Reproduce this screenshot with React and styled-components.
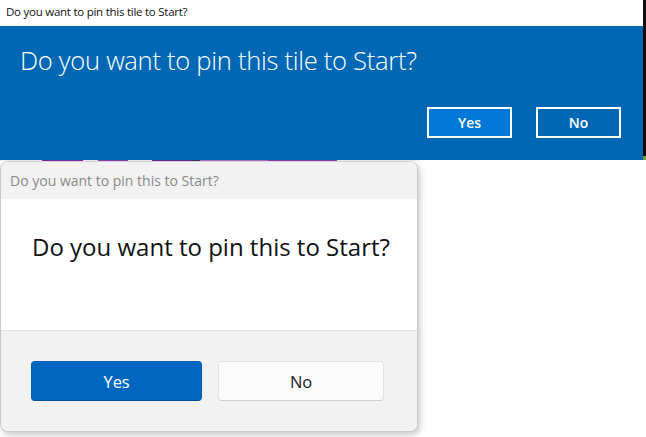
import React from "react";
import styled, { createGlobalStyle } from "styled-components";

const Global = createGlobalStyle`
  html, body {
    margin: 0;
    padding: 0;
    background: #ffffff;
  }
  body {
    font-family: "Segoe UI", "Noto Sans", "Open Sans", sans-serif;
    width: 646px;
    height: 437px;
    overflow: hidden;
  }
`;

const Page = styled.div`
  display: flex;
  flex-direction: column;
  width: 646px;
  height: 437px;
`;

const TopRow = styled.div`
  display: flex;
  height: 160px;
`;

const LegacyDialog = styled.div`
  width: 643px;
  display: flex;
  flex-direction: column;
`;

const LegacyTitle = styled.div`
  height: 26px;
  background: #ffffff;
  color: #111;
  font-family: "Open Sans", sans-serif;
  font-size: 11.5px;
  letter-spacing: -0.25px;
  padding-left: 6px;
  line-height: 24px;
`;

const LegacyBody = styled.div`
  flex: 1;
  background: #0067b4;
  padding: 17px 0 0 20px;
  display: flex;
  flex-direction: column;
`;

const LegacyHeading = styled.div`
  color: #ffffff;
  font-family: "Open Sans", sans-serif;
  font-weight: 300;
  font-size: 25.6px;
  letter-spacing: -0.3px;
  line-height: 35px;
`;

const LegacyActions = styled.div`
  display: flex;
  gap: 24px;
  margin-top: 29px;
  padding-left: 407px;
`;

const LegacyButton = styled.div`
  width: 85px;
  height: 31px;
  box-sizing: border-box;
  border: 2px solid #ffffff;
  background: ${(p) => (p.$primary ? "#0078d7" : "#0067b4")};
  color: #ffffff;
  font-family: "Open Sans", sans-serif;
  font-weight: 600;
  font-size: 14px;
  display: flex;
  align-items: center;
  justify-content: center;
`;

const SideStrip = styled.div`
  flex: 1;
  background: #120a0a;
  border-bottom: 4px solid #6aa535;
`;

const Lower = styled.div`
  display: flex;
  flex-direction: column;
`;

const TileStrip = styled.div`
  width: 420px;
  height: 1px;
  display: flex;
`;

const Tile = styled.div`
  height: 1px;
  width: ${(p) => p.$w}px;
  background: ${(p) => p.$c};
`;

const ModernDialog = styled.div`
  width: 418px;
  height: 271px;
  box-sizing: border-box;
  border: 1px solid #c9c9c9;
  border-top-color: #d4d4d4;
  border-radius: 8px;
  overflow: hidden;
  display: flex;
  flex-direction: column;
  box-shadow: 2px 3px 6px rgba(0, 0, 0, 0.22);
  background: #ffffff;
`;

const ModernHeader = styled.div`
  height: 37px;
  background: #f2f2f2;
  color: #8a8a8a;
  font-family: "Open Sans", sans-serif;
  font-size: 14px;
  line-height: 37px;
  padding-left: 9px;
  letter-spacing: 0;
`;

const ModernBody = styled.div`
  height: 132px;
  background: #ffffff;
  display: flex;
  align-items: center;
  padding-left: 31px;
  padding-bottom: 36px;
  box-sizing: border-box;
  border-bottom: 1px solid #e1e1e1;
  color: #111;
  font-family: "Open Sans", sans-serif;
  font-size: 24px;
  letter-spacing: 0;
`;

const ModernFooter = styled.div`
  flex: 1;
  background: #f2f2f2;
  display: grid;
  grid-template-columns: 171px 166px;
  gap: 16px;
  padding: 30px 0 0 30px;
`;

const ModernButton = styled.div`
  height: 40px;
  box-sizing: border-box;
  border-radius: 4px;
  border: 1px solid ${(p) => (p.$primary ? "#0060b4" : "#e3e3e3")};
  border-bottom-color: ${(p) => (p.$primary ? "#004f96" : "#cdcdcd")};
  background: ${(p) => (p.$primary ? "#0067c0" : "#fbfbfb")};
  color: ${(p) => (p.$primary ? "#ffffff" : "#1a1a1a")};
  font-family: "Open Sans", sans-serif;
  font-size: 16.5px;
  letter-spacing: -0.2px;
  display: flex;
  align-items: center;
  justify-content: center;
`;

const tiles = [
  { w: 42, c: "#eeeeee" },
  { w: 41, c: "#7a2fa6" },
  { w: 15, c: "#eeeeee" },
  { w: 30, c: "#8a3fae" },
  { w: 24, c: "#eeeeee" },
  { w: 41, c: "#6f2a9c" },
  { w: 7, c: "#3a3a4a" },
  { w: 68, c: "#b070d0" },
  { w: 69, c: "#8d3cb0" },
  { w: 83, c: "#eeeeee" },
];

export default function App() {
  return (
    <Page>
      <Global />
      <TopRow>
        <LegacyDialog>
          <LegacyTitle>Do you want to pin this tile to Start?</LegacyTitle>
          <LegacyBody>
            <LegacyHeading>Do you want to pin this tile to Start?</LegacyHeading>
            <LegacyActions>
              <LegacyButton $primary>Yes</LegacyButton>
              <LegacyButton>No</LegacyButton>
            </LegacyActions>
          </LegacyBody>
        </LegacyDialog>
        <SideStrip />
      </TopRow>
      <Lower>
        <TileStrip>
          {tiles.map((t, i) => (
            <Tile key={i} $w={t.w} $c={t.c} />
          ))}
        </TileStrip>
        <ModernDialog>
          <ModernHeader>Do you want to pin this to Start?</ModernHeader>
          <ModernBody>Do you want to pin this to Start?</ModernBody>
          <ModernFooter>
            <ModernButton $primary>Yes</ModernButton>
            <ModernButton>No</ModernButton>
          </ModernFooter>
        </ModernDialog>
      </Lower>
    </Page>
  );
}
